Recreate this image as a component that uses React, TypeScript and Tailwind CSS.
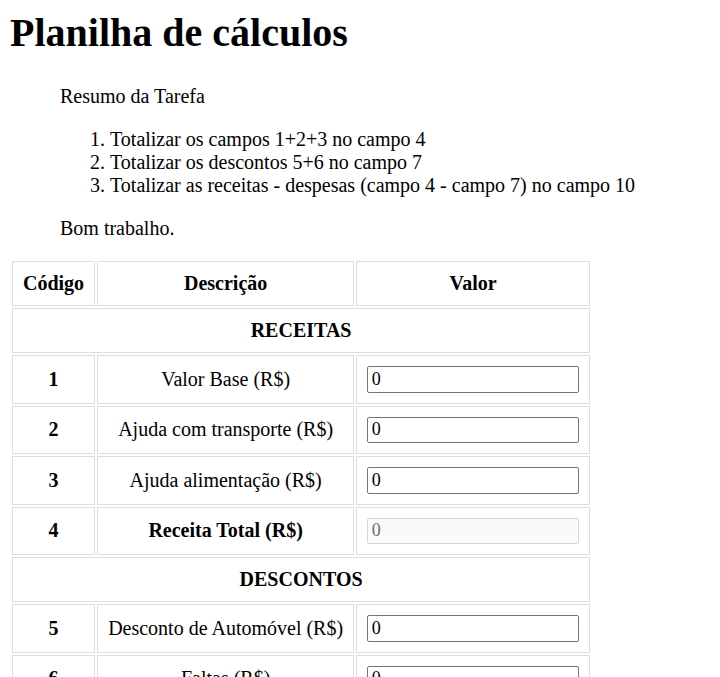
type Linha = {
  codigo: string;
  descricao: string;
  total?: boolean;
};

const receitas: Linha[] = [
  { codigo: "1", descricao: "Valor Base (R$)" },
  { codigo: "2", descricao: "Ajuda com transporte (R$)" },
  { codigo: "3", descricao: "Ajuda alimentação (R$)" },
  { codigo: "4", descricao: "Receita Total (R$)", total: true },
];

const descontos: Linha[] = [
  { codigo: "5", descricao: "Desconto de Automóvel (R$)" },
  { codigo: "6", descricao: "Faltas (R$)" },
  { codigo: "7", descricao: "Desconto Total (R$)", total: true },
];

const resultado: Linha[] = [{ codigo: "10", descricao: "Valor Líquido (R$)", total: true }];

function Secao({ titulo }: { titulo: string }) {
  return (
    <tr>
      <td colSpan={3} className="border border-[#dddddd] p-2.5 text-center font-bold">
        {titulo}
      </td>
    </tr>
  );
}

function LinhaValor({ linha }: { linha: Linha }) {
  return (
    <tr>
      <td className="border border-[#dddddd] p-2.5 text-center font-bold">{linha.codigo}</td>
      <td
        className={
          linha.total
            ? "border border-[#dddddd] p-2.5 text-center font-bold"
            : "border border-[#dddddd] p-2.5 text-center"
        }
      >
        {linha.descricao}
      </td>
      <td className="border border-[#dddddd] p-2.5">
        {linha.total ? (
          <input
            type="text"
            disabled
            defaultValue="0"
            className="block h-[26.5px] w-[212px] rounded-[2px] border border-[#d6d6d6] bg-[#fafafa] px-[3.5px] font-['Liberation_Serif',serif] text-[18px] text-[#6d6d6d]"
          />
        ) : (
          <input
            type="text"
            defaultValue="0"
            className="block h-[26.5px] w-[212px] rounded-[2px] border border-[#767676] bg-white px-[3.5px] font-['Liberation_Serif',serif] text-[18px] text-black"
          />
        )}
      </td>
    </tr>
  );
}

export default function App() {
  return (
    <div className="m-[10px] font-['Liberation_Serif',serif] text-[20px] leading-[23px] text-black">
      <h1 className="text-[40px] leading-[46px] font-bold">Planilha de cálculos</h1>

      {/* Resumo */}
      <div className="mx-[50px] mt-[29px] mb-[19px]">
        <p>Resumo da Tarefa</p>
        <ol className="my-5 list-decimal pl-[50px]">
          <li>Totalizar os campos 1+2+3 no campo 4</li>
          <li>Totalizar os descontos 5+6 no campo 7</li>
          <li>Totalizar as receitas - despesas (campo 4 - campo 7) no campo 10</li>
        </ol>
        <p>Bom trabalho.</p>
      </div>

      <table className="border-separate border-spacing-[2.5px]">
        <thead>
          <tr>
            <th className="w-[83px] border border-[#dddddd] p-2.5 text-center font-bold">Código</th>
            <th className="w-[257px] border border-[#dddddd] p-2.5 text-center font-bold">Descrição</th>
            <th className="w-[234px] border border-[#dddddd] p-2.5 text-center font-bold">Valor</th>
          </tr>
        </thead>
        <tbody>
          <Secao titulo="RECEITAS" />
          {receitas.map((l) => (
            <LinhaValor key={l.codigo} linha={l} />
          ))}
          <Secao titulo="DESCONTOS" />
          {descontos.map((l) => (
            <LinhaValor key={l.codigo} linha={l} />
          ))}
          <Secao titulo="RESULTADO" />
          {resultado.map((l) => (
            <LinhaValor key={l.codigo} linha={l} />
          ))}
        </tbody>
      </table>
    </div>
  );
}
